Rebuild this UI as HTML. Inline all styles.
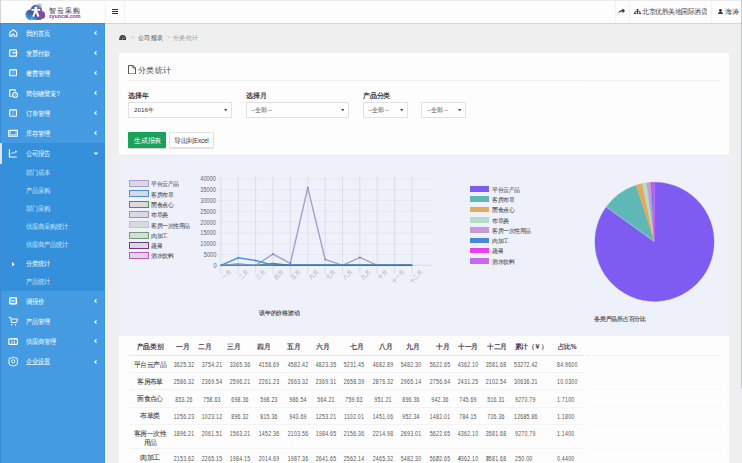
<!DOCTYPE html><html><head><meta charset="utf-8"><style>
*{margin:0;padding:0;box-sizing:border-box}
html,body{width:742px;height:463px;overflow:hidden;background:#efefef;font-family:"Liberation Sans",sans-serif;color:#555}
.abs{position:absolute;white-space:nowrap}
.t{position:absolute;white-space:nowrap;line-height:1}

</style></head><body>
<div class="abs" style="left:0;top:0;width:742px;height:24px;background:#fdfdfd;border-bottom:1px solid #d6d6d6;border-top:1px solid #ececec"></div>
<div class="abs" style="left:105.6px;top:24px;width:1.2px;height:439px;background:#f9f7f4"></div>
<div class="abs" style="left:104.5px;top:1px;width:1px;height:22px;background:#f2f2f2"></div>
<div class="abs" style="left:124px;top:1px;width:1px;height:22px;background:#f2f2f2"></div>
<div class="abs" style="left:614.5px;top:1px;width:1px;height:22px;background:#f2f2f2"></div>
<div class="abs" style="left:629px;top:1px;width:1px;height:22px;background:#f2f2f2"></div>
<div class="abs" style="left:710.5px;top:1px;width:1px;height:22px;background:#f2f2f2"></div>
<svg class="abs" style="left:0;top:0" width="50" height="23" viewBox="0 0 50 23">
<defs><linearGradient id="lg" x1="0.1" y1="0.9" x2="0.9" y2="0.2"><stop offset="0" stop-color="#45b8d8"/><stop offset="0.35" stop-color="#3a7cc4"/><stop offset="0.6" stop-color="#3d5aa8"/><stop offset="1" stop-color="#9a4aa2"/></linearGradient>
<linearGradient id="lg2" x1="0" y1="0" x2="1" y2="0"><stop offset="0" stop-color="#a040a0" stop-opacity="0"/><stop offset="0.6" stop-color="#a040a0" stop-opacity="0"/><stop offset="1" stop-color="#b0409a" stop-opacity="0.9"/></linearGradient>
<radialGradient id="rg" cx="0.55" cy="0.2" r="0.5"><stop offset="0" stop-color="#6cc6dc" stop-opacity="0.9"/><stop offset="1" stop-color="#6cc6dc" stop-opacity="0"/></radialGradient></defs>
<g fill="url(#lg)"><circle cx="36.2" cy="10.6" r="5.9"/><circle cx="30.6" cy="14.8" r="5.2"/><circle cx="41" cy="15.1" r="4.1"/><rect x="30.6" y="13" width="10.4" height="7"/></g>
<g fill="url(#lg2)"><circle cx="36.2" cy="10.6" r="5.9"/><circle cx="41" cy="15.1" r="4.1"/><rect x="30.6" y="13" width="10.4" height="7"/></g>
<circle cx="39" cy="7.5" r="4" fill="url(#rg)"/>
<circle cx="35.8" cy="7.9" r="1.5" fill="#fff"/>
<path d="M31.6 9.9 H40.1" stroke="#fff" stroke-width="1.7"/>
<path d="M35.8 10 L33.2 16.6 M35.8 10 L38.5 16.6" stroke="#fff" stroke-width="2"/>
</svg>
<div class="t" style="left:49.2px;top:6.6px;font-size:29.600px;color:#45455e;letter-spacing:3.400px;-webkit-text-stroke:0.400px #45455e;;transform:scale(0.2425,0.25);transform-origin:0 0">智云采购</div>
<div class="t" style="left:49.3px;top:13.9px;font-size:21.400px;color:#8b3d9b;font-weight:bold;letter-spacing:-0.200px;transform:scale(0.2500,0.25);transform-origin:0 0">zyuncai.com</div>
<div class="abs" style="left:112px;top:9px;width:6px;height:1.2px;background:#333"></div>
<div class="abs" style="left:112px;top:11px;width:6px;height:1.2px;background:#333"></div>
<div class="abs" style="left:112px;top:13px;width:6px;height:1.2px;background:#333"></div>
<svg class="abs" style="left:618.3px;top:8.2px" width="7" height="6" viewBox="0 0 7 6"><path d="M0.5 6 C0.5 3 2 2 4.5 2 L4.5 0.2 L7 2.8 L4.5 5.3 L4.5 3.5 C2.5 3.5 1.2 4 0.5 6Z" fill="#333"/></svg>
<svg class="abs" style="left:633.8px;top:8.7px" width="7" height="5.4" viewBox="0 0 7 5.4"><rect x="2.6" y="0" width="1.8" height="1.7" fill="#2a2a2a"/><circle cx="0.95" cy="4.4" r="0.95" fill="#2a2a2a"/><circle cx="3.5" cy="4.4" r="0.95" fill="#2a2a2a"/><circle cx="6.05" cy="4.4" r="0.95" fill="#2a2a2a"/><path d="M0.95 3.6 V2.6 H6.05 V3.6 M3.5 1.5 V3.6" stroke="#2a2a2a" stroke-width="0.7" fill="none"/></svg>
<div class="t" style="left:642.3px;top:8px;font-size:26.400px;color:#444;transform:scale(0.2500,0.25);transform-origin:0 0">北京优胜美地国际酒店</div>
<svg class="abs" style="left:718px;top:8.5px" width="5" height="5.5" viewBox="0 0 5 5.5"><circle cx="2.5" cy="1.5" r="1.4" fill="#333"/><path d="M0 5.5 C0 3.5 1 3 2.5 3 C4 3 5 3.5 5 5.5Z" fill="#333"/></svg>
<div class="t" style="left:724.8px;top:8px;font-size:27.200px;color:#444;transform:scale(0.2500,0.25);transform-origin:0 0">海涛</div>
<div class="abs" style="left:740.8px;top:0px;width:1.2px;height:389px;background:#c5c9cf"></div>
<div class="abs" style="left:0;top:23px;width:105px;height:440px;background:#449be2"></div>
<div class="abs" style="left:0;top:143px;width:105px;height:148px;background:#3590db"></div>
<div class="abs" style="left:104px;top:23px;width:1px;height:440px;background:#3b91dd;opacity:0.6"></div>
<div class="abs" style="left:0;top:23px;width:105px;height:1px;background:#3a8edb"></div>
<div class="abs" style="left:0;top:23px;width:0.8px;height:440px;background:#3a8ad5"></div>
<div class="abs" style="left:0;top:0;width:0.8px;height:23px;background:#d4d4d4"></div>
<div class="abs" style="left:0;top:143px;width:1.7px;height:20.5px;background:#dce3ea"></div>
<svg class="abs" style="left:0;top:0" width="105" height="463" viewBox="0 0 105 463">
<g stroke="#fff" fill="none" stroke-linejoin="round" stroke-width="1.1">
<path d="M9.6 32.6 L13.3 29.6 L17 32.6"/>
<path d="M9.8 32.4 V36.2 H11.9 V34.6 Q13.0 33.6 14.1 34.6 V36.2 H16.8 V32.4"/>
<rect x="9.7" y="49.9" width="6.7" height="6.2"/>
<path d="M14.2 52.8 H17.6"/>
<rect x="9.7" y="69.9" width="6.8" height="5.9" rx="0.4"/>
<path d="M12.0 71.2 V74.6 M13.1 71.2 V74.6 M14.2 71.2 V74.6" stroke-width="0.4" opacity="0.6"/>
<path d="M15.3 91.5 V89.9 H9.7 V96.2 H11.8"/>
<circle cx="15.1" cy="94.9" r="2.4"/>
<rect x="9.7" y="109.9" width="6.8" height="6.3" rx="0.8"/>
<path d="M11.7 111.7 H14.5 M11.7 113 H14.5 M11.7 114.3 H14.5" stroke-width="0.5" opacity="0.6"/>
<rect x="8.7" y="130.4" width="8.7" height="5.9" rx="0.4"/>
<path d="M10.2 132.5 V135 H16 V132.5 M10 131.5 H11 M15.5 131.5 H16.2" stroke-width="0.8"/>
<path d="M9.4 149.2 V157 H16.8"/>
<path d="M10.5 154.1 L12.5 152.5 L14 153.4 L15.6 151.8" stroke-width="0.8"/>
<rect x="9.7" y="297.9" width="6.8" height="6" rx="0.4"/>
<path d="M11 299 V302.5 L13.1 304.3 L15.2 302.5 V299" stroke-width="0.7"/>
<path d="M8.7 317.4 H10.6 L11.5 322.5 H16.6 L17.5 319 H11.2" stroke-width="0.95"/>
<rect x="8.8" y="338.9" width="8.6" height="5.5" rx="0.6"/>
<path d="M12 340.5 V343.5 M14.4 340.5 V343.5" stroke-width="0.8"/>
<path d="M13.2 357 L14.8 358 L16.9 358 L17.5 359.8 L17.5 362.8 L16.9 364.6 L14.8 365.6 L13.2 366 L11.6 365.6 L9.5 364.6 L8.9 362.8 L8.9 359.8 L9.5 358 L11.6 358 Z" stroke-width="0.95"/>
<circle cx="13.2" cy="361.3" r="1.6" stroke-width="0.9"/>
</g>
<g fill="#fff">
<circle cx="13.4" cy="52.8" r="1.05"/>
<circle cx="15.8" cy="151.6" r="0.95"/>
<circle cx="13.1" cy="300.9" r="0.9"/>
<rect x="13.6" y="338" width="3.4" height="1.2"/>
<circle cx="11.7" cy="324.7" r="0.7"/><circle cx="15.5" cy="324.7" r="0.7"/>
<path d="M14.4 94.2 L15.1 95.8 L15.8 94.2 Z"/>
</g></svg>
<div class="t" style="left:25.8px;top:29.90px;font-size:27.200px;color:#fff;;transform:scale(0.2250,0.25);transform-origin:0 0">我的首页</div>
<svg class="abs" style="left:94.3px;top:31.4px" width="3" height="4" viewBox="0 0 3 4"><path d="M2.5 0.3 L0.8 2 L2.5 3.7" stroke="#fff" stroke-width="1.1" fill="none"/></svg>
<div class="t" style="left:25.8px;top:49.80px;font-size:27.200px;color:#fff;;transform:scale(0.2250,0.25);transform-origin:0 0">发票付款</div>
<svg class="abs" style="left:94.3px;top:51.3px" width="3" height="4" viewBox="0 0 3 4"><path d="M2.5 0.3 L0.8 2 L2.5 3.7" stroke="#fff" stroke-width="1.1" fill="none"/></svg>
<div class="t" style="left:25.8px;top:69.70px;font-size:27.200px;color:#fff;;transform:scale(0.2250,0.25);transform-origin:0 0">餐费管理</div>
<svg class="abs" style="left:94.3px;top:71.2px" width="3" height="4" viewBox="0 0 3 4"><path d="M2.5 0.3 L0.8 2 L2.5 3.7" stroke="#fff" stroke-width="1.1" fill="none"/></svg>
<div class="t" style="left:25.8px;top:89.50px;font-size:27.200px;color:#fff;;transform:scale(0.2250,0.25);transform-origin:0 0">简创确警宠?</div>
<svg class="abs" style="left:94.3px;top:91.0px" width="3" height="4" viewBox="0 0 3 4"><path d="M2.5 0.3 L0.8 2 L2.5 3.7" stroke="#fff" stroke-width="1.1" fill="none"/></svg>
<div class="t" style="left:25.8px;top:109.50px;font-size:27.200px;color:#fff;;transform:scale(0.2250,0.25);transform-origin:0 0">订单管理</div>
<svg class="abs" style="left:94.3px;top:111.0px" width="3" height="4" viewBox="0 0 3 4"><path d="M2.5 0.3 L0.8 2 L2.5 3.7" stroke="#fff" stroke-width="1.1" fill="none"/></svg>
<div class="t" style="left:25.8px;top:129.50px;font-size:27.200px;color:#fff;;transform:scale(0.2250,0.25);transform-origin:0 0">库存管理</div>
<svg class="abs" style="left:94.3px;top:131.0px" width="3" height="4" viewBox="0 0 3 4"><path d="M2.5 0.3 L0.8 2 L2.5 3.7" stroke="#fff" stroke-width="1.1" fill="none"/></svg>
<div class="t" style="left:25.8px;top:149.50px;font-size:27.200px;color:#fff;;transform:scale(0.2250,0.25);transform-origin:0 0">公司报告</div>
<svg class="abs" style="left:93.5px;top:151.7px" width="4" height="3" viewBox="0 0 4 3"><path d="M0.4 0.5 L2 2.1 L3.6 0.5" stroke="#fff" stroke-width="1.2" fill="none"/></svg>
<div class="t" style="left:25.7px;top:168.90px;font-size:26.800px;color:#d2e6f8;transform:scale(0.2250,0.25);transform-origin:0 0">部门成本</div>
<div class="t" style="left:25.7px;top:187.00px;font-size:26.800px;color:#d2e6f8;transform:scale(0.2250,0.25);transform-origin:0 0">产品采购</div>
<div class="t" style="left:25.7px;top:205.10px;font-size:26.800px;color:#d2e6f8;transform:scale(0.2250,0.25);transform-origin:0 0">部门采购</div>
<div class="t" style="left:25.7px;top:222.90px;font-size:26.800px;color:#d2e6f8;transform:scale(0.2250,0.25);transform-origin:0 0">供应商采购统计</div>
<div class="t" style="left:25.7px;top:241.40px;font-size:26.800px;color:#d2e6f8;transform:scale(0.2250,0.25);transform-origin:0 0">供应商产品统计</div>
<div class="t" style="left:25.7px;top:260.10px;font-size:26.800px;color:#fff;transform:scale(0.2250,0.25);transform-origin:0 0">分类统计</div>
<div class="t" style="left:25.7px;top:278.20px;font-size:26.800px;color:#d2e6f8;transform:scale(0.2250,0.25);transform-origin:0 0">产品统计</div>
<svg class="abs" style="left:12px;top:262px" width="3" height="4.5" viewBox="0 0 3 4.5"><path d="M0 0 L2.6 2.25 L0 4.5Z" fill="#fff"/></svg>
<div class="t" style="left:25.8px;top:297.90px;font-size:27.200px;color:#fff;;transform:scale(0.2250,0.25);transform-origin:0 0">调报价</div>
<svg class="abs" style="left:94.3px;top:299.4px" width="3" height="4" viewBox="0 0 3 4"><path d="M2.5 0.3 L0.8 2 L2.5 3.7" stroke="#fff" stroke-width="1.1" fill="none"/></svg>
<div class="t" style="left:25.8px;top:318.00px;font-size:27.200px;color:#fff;;transform:scale(0.2250,0.25);transform-origin:0 0">产品管理</div>
<svg class="abs" style="left:94.3px;top:319.5px" width="3" height="4" viewBox="0 0 3 4"><path d="M2.5 0.3 L0.8 2 L2.5 3.7" stroke="#fff" stroke-width="1.1" fill="none"/></svg>
<div class="t" style="left:25.8px;top:337.90px;font-size:27.200px;color:#fff;;transform:scale(0.2250,0.25);transform-origin:0 0">供应商管理</div>
<svg class="abs" style="left:94.3px;top:339.4px" width="3" height="4" viewBox="0 0 3 4"><path d="M2.5 0.3 L0.8 2 L2.5 3.7" stroke="#fff" stroke-width="1.1" fill="none"/></svg>
<div class="t" style="left:25.8px;top:358.00px;font-size:27.200px;color:#fff;text-decoration:underline;;transform:scale(0.2250,0.25);transform-origin:0 0">企业设置</div>
<svg class="abs" style="left:94.3px;top:359.5px" width="3" height="4" viewBox="0 0 3 4"><path d="M2.5 0.3 L0.8 2 L2.5 3.7" stroke="#fff" stroke-width="1.1" fill="none"/></svg>
<svg class="abs" style="left:118.6px;top:34.6px" width="7.4" height="5.6" viewBox="0 0 7.4 5.6"><path d="M0.2 5.4 C0 1.2 1.8 0 3.7 0 C5.6 0 7.4 1.2 7.2 5.4 Z" fill="#3a3a3a"/><path d="M3.4 5 L4.4 2.2 M1.4 3.2 L2.2 3.5 M5.9 3.2 L5.1 3.5 M3.7 1 V1.7" stroke="#cfd3d8" stroke-width="0.6"/></svg>
<div class="t" style="left:131px;top:33.9px;font-size:24.000px;color:#bbb;transform:scale(0.2500,0.25);transform-origin:0 0">&gt;</div>
<div class="t" style="left:137.5px;top:34.8px;font-size:25.400px;color:#3a3a3a;transform:scale(0.2500,0.25);transform-origin:0 0">公司报表</div>
<div class="t" style="left:167.2px;top:33.9px;font-size:24.000px;color:#bbb;transform:scale(0.2500,0.25);transform-origin:0 0">&gt;</div>
<div class="t" style="left:173.2px;top:34.8px;font-size:25.400px;color:#999;transform:scale(0.2500,0.25);transform-origin:0 0">分类统计</div>
<div class="abs" style="left:119px;top:53px;width:610px;height:410px;background:#fdfdfd"></div>
<svg class="abs" style="left:128px;top:65px" width="8" height="9.4" viewBox="0 0 8 9.4"><path d="M0.5 0.5 H5 L7.5 3 V8.9 H0.5 Z M5 0.5 V3 H7.5" stroke="#444" stroke-width="0.9" fill="none"/></svg>
<div class="t" style="left:138.4px;top:65.6px;font-size:32.800px;color:#444;transform:scale(0.2500,0.25);transform-origin:0 0">分类统计</div>
<div class="abs" style="left:128px;top:80.2px;width:453px;height:1px;background:#efefef"></div>
<div class="abs" style="left:581px;top:80.2px;width:139px;height:0;border-top:1px dotted #e6e6e6"></div>
<div class="t" style="left:128.2px;top:91.6px;font-size:27.200px;color:#333;font-weight:bold;transform:scale(0.2500,0.25);transform-origin:0 0">选择年</div>
<div class="t" style="left:245.5px;top:91.6px;font-size:27.200px;color:#333;font-weight:bold;transform:scale(0.2500,0.25);transform-origin:0 0">选择月</div>
<div class="t" style="left:362.6px;top:91.6px;font-size:27.200px;color:#333;font-weight:bold;transform:scale(0.2500,0.25);transform-origin:0 0">产品分类</div>
<div class="abs" style="left:128.2px;top:102.2px;width:103.9px;height:15.6px;background:#fff;border:1px solid #e0e0e6"></div>
<div class="t" style="left:134.0px;top:106.6px;font-size:25.000px;color:#3a3a3a;transform:scale(0.2500,0.25);transform-origin:0 0">2016年</div>
<svg class="abs" style="left:223.7px;top:108.8px" width="3.6" height="2.4" viewBox="0 0 4 2.5" preserveAspectRatio="none"><path d="M0 0 H4 L2 2.5Z" fill="#555"/></svg>
<div class="abs" style="left:245.5px;top:102.2px;width:103.7px;height:15.6px;background:#fff;border:1px solid #e0e0e6"></div>
<div class="t" style="left:251.3px;top:106.6px;font-size:25.000px;color:#3a3a3a;transform:scale(0.2500,0.25);transform-origin:0 0">--全部--</div>
<svg class="abs" style="left:340.8px;top:108.8px" width="3.6" height="2.4" viewBox="0 0 4 2.5" preserveAspectRatio="none"><path d="M0 0 H4 L2 2.5Z" fill="#555"/></svg>
<div class="abs" style="left:362.6px;top:102.2px;width:45.5px;height:15.6px;background:#fff;border:1px solid #e0e0e6"></div>
<div class="t" style="left:368.4px;top:106.6px;font-size:25.000px;color:#3a3a3a;transform:scale(0.2500,0.25);transform-origin:0 0">--全部--</div>
<svg class="abs" style="left:399.7px;top:108.8px" width="3.6" height="2.4" viewBox="0 0 4 2.5" preserveAspectRatio="none"><path d="M0 0 H4 L2 2.5Z" fill="#555"/></svg>
<div class="abs" style="left:420.8px;top:102.2px;width:45.3px;height:15.6px;background:#fff;border:1px solid #e0e0e6"></div>
<div class="t" style="left:426.6px;top:106.6px;font-size:25.000px;color:#3a3a3a;transform:scale(0.2500,0.25);transform-origin:0 0">--全部--</div>
<svg class="abs" style="left:457.7px;top:108.8px" width="3.6" height="2.4" viewBox="0 0 4 2.5" preserveAspectRatio="none"><path d="M0 0 H4 L2 2.5Z" fill="#555"/></svg>
<div class="abs" style="left:128.2px;top:132px;width:38.2px;height:16.2px;background:#19a35a;border-radius:1px;box-shadow:0 0.6px 0.8px rgba(0,0,0,0.18)"></div>
<div class="t" style="left:133.8px;top:136.6px;font-size:27.200px;color:#fff;transform:scale(0.2500,0.25);transform-origin:0 0">生成报表</div>
<div class="abs" style="left:168.7px;top:132px;width:45.7px;height:16.2px;background:#fff;border:1px solid #e2e2e2;border-radius:1px;box-shadow:0 0.6px 0.8px rgba(0,0,0,0.1)"></div>
<div class="t" style="left:174px;top:136.8px;font-size:26.400px;color:#333;transform:scale(0.2500,0.25);transform-origin:0 0">导出到<span style="font-size:25.200px;letter-spacing:-0.800px;padding-left:2px">Excel</span></div>
<div class="abs" style="left:119px;top:154.5px;width:610px;height:181px;background:#eef1fa;border-top:1px solid #e4e9f6"></div>
<svg class="abs" style="left:0;top:0" width="742" height="463" viewBox="0 0 742 463"><line x1="217" y1="265.30" x2="432" y2="265.30" stroke="#dcdee5" stroke-width="0.5"/><line x1="217" y1="254.50" x2="432" y2="254.50" stroke="#dcdee5" stroke-width="0.5"/><line x1="217" y1="243.70" x2="432" y2="243.70" stroke="#dcdee5" stroke-width="0.5"/><line x1="217" y1="232.90" x2="432" y2="232.90" stroke="#dcdee5" stroke-width="0.5"/><line x1="217" y1="222.10" x2="432" y2="222.10" stroke="#dcdee5" stroke-width="0.5"/><line x1="217" y1="211.30" x2="432" y2="211.30" stroke="#dcdee5" stroke-width="0.5"/><line x1="217" y1="200.50" x2="432" y2="200.50" stroke="#dcdee5" stroke-width="0.5"/><line x1="217" y1="189.70" x2="432" y2="189.70" stroke="#dcdee5" stroke-width="0.5"/><line x1="217" y1="178.90" x2="432" y2="178.90" stroke="#dcdee5" stroke-width="0.5"/><line x1="220.90" y1="176.5" x2="220.90" y2="274.4" stroke="#d4d6dc" stroke-width="0.7"/><line x1="238.27" y1="176.5" x2="238.27" y2="274.4" stroke="#d4d6dc" stroke-width="0.7"/><line x1="255.64" y1="176.5" x2="255.64" y2="274.4" stroke="#d4d6dc" stroke-width="0.7"/><line x1="273.01" y1="176.5" x2="273.01" y2="274.4" stroke="#d4d6dc" stroke-width="0.7"/><line x1="290.38" y1="176.5" x2="290.38" y2="274.4" stroke="#d4d6dc" stroke-width="0.7"/><line x1="307.75" y1="176.5" x2="307.75" y2="274.4" stroke="#d4d6dc" stroke-width="0.7"/><line x1="325.12" y1="176.5" x2="325.12" y2="274.4" stroke="#d4d6dc" stroke-width="0.7"/><line x1="342.49" y1="176.5" x2="342.49" y2="274.4" stroke="#d4d6dc" stroke-width="0.7"/><line x1="359.86" y1="176.5" x2="359.86" y2="274.4" stroke="#d4d6dc" stroke-width="0.7"/><line x1="377.23" y1="176.5" x2="377.23" y2="274.4" stroke="#d4d6dc" stroke-width="0.7"/><line x1="394.60" y1="176.5" x2="394.60" y2="274.4" stroke="#d4d6dc" stroke-width="0.7"/><line x1="411.97" y1="176.5" x2="411.97" y2="274.4" stroke="#d4d6dc" stroke-width="0.7"/><polyline points="220.90,265.30 238.27,263.79 255.64,265.30 273.01,264.65 290.38,265.30 307.75,265.30 325.12,265.30 342.49,265.30 359.86,265.30 377.23,265.30 394.60,265.30 411.97,265.30" fill="none" stroke="#8a8a9a" stroke-width="1.2"/><polyline points="220.90,265.30 238.27,265.30 255.64,265.30 273.01,263.36 290.38,265.30 307.75,265.30 325.12,265.30 342.49,265.30 359.86,265.30 377.23,265.30 394.60,265.30 411.97,265.30" fill="none" stroke="#3aa05a" stroke-width="1.2"/><polyline points="220.90,265.30 238.27,264.87 255.64,265.30 273.01,254.07 290.38,263.36 307.75,187.54 325.12,259.36 342.49,265.30 359.86,257.42 377.23,265.30 394.60,265.30 411.97,265.30" fill="none" stroke="#a59dd2" stroke-width="1.4"/><polyline points="220.90,265.30 238.27,257.74 255.64,260.55 273.01,265.30 290.38,265.30 307.75,265.30 325.12,265.30 342.49,265.30 359.86,265.30 377.23,265.30 394.60,265.30 411.97,265.30" fill="none" stroke="#4b95e6" stroke-width="1.4"/><line x1="220.90" y1="265.30" x2="273.01" y2="265.30" stroke="#5a82b0" stroke-width="1.3"/><line x1="273.01" y1="265.30" x2="411.97" y2="265.30" stroke="#3f6fac" stroke-width="1.6"/><line x1="411.97" y1="265.30" x2="432" y2="265.30" stroke="#cfd1d8" stroke-width="0.6"/><circle cx="220.90" cy="265.30" r="0.9" fill="#3a8fe0"/><circle cx="238.27" cy="265.30" r="0.9" fill="#3a8fe0"/><circle cx="255.64" cy="265.30" r="0.9" fill="#3a8fe0"/><circle cx="273.01" cy="265.30" r="0.9" fill="#3a8fe0"/><circle cx="290.38" cy="265.30" r="0.9" fill="#3a8fe0"/><circle cx="307.75" cy="265.30" r="0.9" fill="#3a8fe0"/><circle cx="325.12" cy="265.30" r="0.9" fill="#3a8fe0"/><circle cx="342.49" cy="265.30" r="0.9" fill="#3a8fe0"/><circle cx="359.86" cy="265.30" r="0.9" fill="#3a8fe0"/><circle cx="377.23" cy="265.30" r="0.9" fill="#3a8fe0"/><circle cx="394.60" cy="265.30" r="0.9" fill="#3a8fe0"/><circle cx="411.97" cy="265.30" r="0.9" fill="#3a8fe0"/><circle cx="307.75" cy="187.54" r="0.9" fill="#3a8fe0"/><circle cx="273.01" cy="254.07" r="0.9" fill="#3a8fe0"/><circle cx="359.86" cy="257.42" r="0.9" fill="#3a8fe0"/><circle cx="325.12" cy="259.36" r="0.9" fill="#3a8fe0"/><circle cx="290.38" cy="263.36" r="0.9" fill="#3a8fe0"/><circle cx="238.27" cy="257.74" r="0.9" fill="#3a8fe0"/><circle cx="255.64" cy="260.55" r="0.9" fill="#3a8fe0"/></svg>
<div class="t" style="right:525.9px;top:261.88px;font-size:28.000px;color:#666;transform:scale(0.2000,0.25);transform-origin:100% 0">0</div>
<div class="t" style="right:525.9px;top:251.08px;font-size:28.000px;color:#666;transform:scale(0.2000,0.25);transform-origin:100% 0">5000</div>
<div class="t" style="right:525.9px;top:240.28px;font-size:28.000px;color:#666;transform:scale(0.2000,0.25);transform-origin:100% 0">10000</div>
<div class="t" style="right:525.9px;top:229.48px;font-size:28.000px;color:#666;transform:scale(0.2000,0.25);transform-origin:100% 0">15000</div>
<div class="t" style="right:525.9px;top:218.68px;font-size:28.000px;color:#666;transform:scale(0.2000,0.25);transform-origin:100% 0">20000</div>
<div class="t" style="right:525.9px;top:207.88px;font-size:28.000px;color:#666;transform:scale(0.2000,0.25);transform-origin:100% 0">25000</div>
<div class="t" style="right:525.9px;top:197.08px;font-size:28.000px;color:#666;transform:scale(0.2000,0.25);transform-origin:100% 0">30000</div>
<div class="t" style="right:525.9px;top:186.28px;font-size:28.000px;color:#666;transform:scale(0.2000,0.25);transform-origin:100% 0">35000</div>
<div class="t" style="right:525.9px;top:175.48px;font-size:28.000px;color:#666;transform:scale(0.2000,0.25);transform-origin:100% 0">40000</div>
<div class="t" style="right:511.3px;top:260.2px;font-size:22.400px;color:#a8a8a8;transform:rotate(-45deg) scale(0.2500,0.25);transform-origin:100% 50%">一月</div>
<div class="t" style="right:493.9px;top:260.2px;font-size:22.400px;color:#a8a8a8;transform:rotate(-45deg) scale(0.2500,0.25);transform-origin:100% 50%">二月</div>
<div class="t" style="right:476.6px;top:260.2px;font-size:22.400px;color:#a8a8a8;transform:rotate(-45deg) scale(0.2500,0.25);transform-origin:100% 50%">三月</div>
<div class="t" style="right:459.2px;top:260.2px;font-size:22.400px;color:#a8a8a8;transform:rotate(-45deg) scale(0.2500,0.25);transform-origin:100% 50%">四月</div>
<div class="t" style="right:441.8px;top:260.2px;font-size:22.400px;color:#a8a8a8;transform:rotate(-45deg) scale(0.2500,0.25);transform-origin:100% 50%">五月</div>
<div class="t" style="right:424.4px;top:260.2px;font-size:22.400px;color:#a8a8a8;transform:rotate(-45deg) scale(0.2500,0.25);transform-origin:100% 50%">六月</div>
<div class="t" style="right:407.1px;top:260.2px;font-size:22.400px;color:#a8a8a8;transform:rotate(-45deg) scale(0.2500,0.25);transform-origin:100% 50%">七月</div>
<div class="t" style="right:389.7px;top:260.2px;font-size:22.400px;color:#a8a8a8;transform:rotate(-45deg) scale(0.2500,0.25);transform-origin:100% 50%">八月</div>
<div class="t" style="right:372.3px;top:260.2px;font-size:22.400px;color:#a8a8a8;transform:rotate(-45deg) scale(0.2500,0.25);transform-origin:100% 50%">九月</div>
<div class="t" style="right:355.0px;top:260.2px;font-size:22.400px;color:#a8a8a8;transform:rotate(-45deg) scale(0.2500,0.25);transform-origin:100% 50%">十月</div>
<div class="t" style="right:337.6px;top:260.2px;font-size:22.400px;color:#a8a8a8;transform:rotate(-45deg) scale(0.2500,0.25);transform-origin:100% 50%">十一月</div>
<div class="t" style="right:320.2px;top:260.2px;font-size:22.400px;color:#a8a8a8;transform:rotate(-45deg) scale(0.2500,0.25);transform-origin:100% 50%">十二月</div>
<div class="t" style="left:259.2px;top:310px;font-size:23.200px;color:#555;font-weight:bold;transform:scale(0.2500,0.25);transform-origin:0 0">该年的价格波动</div>
<div class="abs" style="left:129.2px;top:180.20px;width:20px;height:7px;background:#d9d9de;border:1.4px solid #a89fd0"></div>
<div class="t" style="left:151.4px;top:181.40px;font-size:22.000px;color:#555;-webkit-text-stroke:0.320px #555;transform:scale(0.2500,0.25);transform-origin:0 0">平台云产品</div>
<div class="abs" style="left:129.2px;top:190.48px;width:20px;height:7px;background:#d9d9de;border:1.4px solid #4a90e2"></div>
<div class="t" style="left:151.4px;top:191.68px;font-size:22.000px;color:#555;-webkit-text-stroke:0.320px #555;transform:scale(0.2500,0.25);transform-origin:0 0">客房布草</div>
<div class="abs" style="left:129.2px;top:200.76px;width:20px;height:7px;background:#d9d9de;border:1.4px solid #3a9a5a"></div>
<div class="t" style="left:151.4px;top:201.96px;font-size:22.000px;color:#555;-webkit-text-stroke:0.320px #555;transform:scale(0.2500,0.25);transform-origin:0 0">面食点心</div>
<div class="abs" style="left:129.2px;top:211.04px;width:20px;height:7px;background:#d9d9de;border:1.4px solid #9f90b5"></div>
<div class="t" style="left:151.4px;top:212.24px;font-size:22.000px;color:#555;-webkit-text-stroke:0.320px #555;transform:scale(0.2500,0.25);transform-origin:0 0">布草类</div>
<div class="abs" style="left:129.2px;top:221.32px;width:20px;height:7px;background:#d9d9de;border:1.4px solid #a8c8ef"></div>
<div class="t" style="left:151.4px;top:222.52px;font-size:22.000px;color:#555;-webkit-text-stroke:0.320px #555;transform:scale(0.2500,0.25);transform-origin:0 0">客房一次性用品</div>
<div class="abs" style="left:129.2px;top:231.60px;width:20px;height:7px;background:#d9d9de;border:1.4px solid #6aa06a"></div>
<div class="t" style="left:151.4px;top:232.80px;font-size:22.000px;color:#555;-webkit-text-stroke:0.320px #555;transform:scale(0.2500,0.25);transform-origin:0 0">肉加工</div>
<div class="abs" style="left:129.2px;top:241.88px;width:20px;height:7px;background:#d9d9de;border:1.4px solid #6e3c7a"></div>
<div class="t" style="left:151.4px;top:243.08px;font-size:22.000px;color:#555;-webkit-text-stroke:0.320px #555;transform:scale(0.2500,0.25);transform-origin:0 0">蔬菜</div>
<div class="abs" style="left:129.2px;top:252.16px;width:20px;height:7px;background:#d9d9de;border:1.4px solid #c654c6"></div>
<div class="t" style="left:151.4px;top:253.36px;font-size:22.000px;color:#555;-webkit-text-stroke:0.320px #555;transform:scale(0.2500,0.25);transform-origin:0 0">酒水饮料</div>
<div class="abs" style="left:470.4px;top:186.20px;width:18.8px;height:5.6px;background:#7e5cf2"></div>
<div class="t" style="left:492px;top:186.80px;font-size:22.000px;color:#555;-webkit-text-stroke:0.320px #555;transform:scale(0.2500,0.25);transform-origin:0 0">平台云产品</div>
<div class="abs" style="left:470.4px;top:196.48px;width:18.8px;height:5.6px;background:#5fb8b6"></div>
<div class="t" style="left:492px;top:197.08px;font-size:22.000px;color:#555;-webkit-text-stroke:0.320px #555;transform:scale(0.2500,0.25);transform-origin:0 0">客房布草</div>
<div class="abs" style="left:470.4px;top:206.76px;width:18.8px;height:5.6px;background:#e3a95c"></div>
<div class="t" style="left:492px;top:207.36px;font-size:22.000px;color:#555;-webkit-text-stroke:0.320px #555;transform:scale(0.2500,0.25);transform-origin:0 0">面食点心</div>
<div class="abs" style="left:470.4px;top:217.04px;width:18.8px;height:5.6px;background:#b3dccb"></div>
<div class="t" style="left:492px;top:217.64px;font-size:22.000px;color:#555;-webkit-text-stroke:0.320px #555;transform:scale(0.2500,0.25);transform-origin:0 0">布草类</div>
<div class="abs" style="left:470.4px;top:227.32px;width:18.8px;height:5.6px;background:#c89ad2"></div>
<div class="t" style="left:492px;top:227.92px;font-size:22.000px;color:#555;-webkit-text-stroke:0.320px #555;transform:scale(0.2500,0.25);transform-origin:0 0">客房一次性用品</div>
<div class="abs" style="left:470.4px;top:237.60px;width:18.8px;height:5.6px;background:#4a86dc"></div>
<div class="t" style="left:492px;top:238.20px;font-size:22.000px;color:#555;-webkit-text-stroke:0.320px #555;transform:scale(0.2500,0.25);transform-origin:0 0">肉加工</div>
<div class="abs" style="left:470.4px;top:247.88px;width:18.8px;height:5.6px;background:#ea3ff2"></div>
<div class="t" style="left:492px;top:248.48px;font-size:22.000px;color:#555;-webkit-text-stroke:0.320px #555;transform:scale(0.2500,0.25);transform-origin:0 0">蔬菜</div>
<div class="abs" style="left:470.4px;top:258.16px;width:18.8px;height:5.6px;background:#c66be9"></div>
<div class="t" style="left:492px;top:258.76px;font-size:22.000px;color:#555;-webkit-text-stroke:0.320px #555;transform:scale(0.2500,0.25);transform-origin:0 0">酒水饮料</div>
<svg class="abs" style="left:0;top:0" width="742" height="463" viewBox="0 0 742 463"><path d="M654.5,241.8 L654.50,182.20 A59.6,59.6 0 1 1 606.19,206.89 Z" fill="#7e5cf2" stroke="#7e5cf2" stroke-width="0.3"/><path d="M654.5,241.8 L606.19,206.89 A59.6,59.6 0 0 1 636.05,185.13 Z" fill="#5fb8b6" stroke="#5fb8b6" stroke-width="0.3"/><path d="M654.5,241.8 L636.05,185.13 A59.6,59.6 0 0 1 642.23,183.48 Z" fill="#e3a95c" stroke="#e3a95c" stroke-width="0.3"/><path d="M654.5,241.8 L642.23,183.48 A59.6,59.6 0 0 1 646.58,182.73 Z" fill="#b3dccb" stroke="#b3dccb" stroke-width="0.3"/><path d="M654.5,241.8 L646.58,182.73 A59.6,59.6 0 0 1 650.83,182.31 Z" fill="#c89ad2" stroke="#c89ad2" stroke-width="0.3"/><path d="M654.5,241.8 L650.83,182.31 A59.6,59.6 0 0 1 652.48,182.23 Z" fill="#4a86dc" stroke="#4a86dc" stroke-width="0.3"/><path d="M654.5,241.8 L652.48,182.23 A59.6,59.6 0 0 1 654.35,182.20 Z" fill="#ea3ff2" stroke="#ea3ff2" stroke-width="0.3"/><path d="M654.5,241.8 L654.35,182.20 A59.6,59.6 0 0 1 654.50,182.20 Z" fill="#c66be9" stroke="#c66be9" stroke-width="0.3"/><line x1="654.5" y1="241.8" x2="606.19" y2="206.89" stroke="rgba(255,255,255,0.55)" stroke-width="0.5"/></svg>
<div class="t" style="left:593.6px;top:316.2px;font-size:23.200px;color:#555;font-weight:bold;transform:scale(0.2500,0.25);transform-origin:0 0">各类产品所占百分比</div>
<div class="t" style="left:110.3px;width:329.897px;text-align:center;top:343.2px;font-size:26.800px;color:#3f3050;font-weight:bold;;transform:scale(0.2425,0.25);transform-origin:0 0">产品类别</div>
<div class="t" style="left:142.6px;width:329.897px;text-align:center;top:343.2px;font-size:26.800px;color:#3f3050;font-weight:bold;;transform:scale(0.2425,0.25);transform-origin:0 0">一月</div>
<div class="t" style="left:164.6px;width:329.897px;text-align:center;top:343.2px;font-size:26.800px;color:#3f3050;font-weight:bold;;transform:scale(0.2425,0.25);transform-origin:0 0">二月</div>
<div class="t" style="left:194.4px;width:329.897px;text-align:center;top:343.2px;font-size:26.800px;color:#3f3050;font-weight:bold;;transform:scale(0.2425,0.25);transform-origin:0 0">三月</div>
<div class="t" style="left:224.2px;width:329.897px;text-align:center;top:343.2px;font-size:26.800px;color:#3f3050;font-weight:bold;;transform:scale(0.2425,0.25);transform-origin:0 0">四月</div>
<div class="t" style="left:253.9px;width:329.897px;text-align:center;top:343.2px;font-size:26.800px;color:#3f3050;font-weight:bold;;transform:scale(0.2425,0.25);transform-origin:0 0">五月</div>
<div class="t" style="left:283.3px;width:329.897px;text-align:center;top:343.2px;font-size:26.800px;color:#3f3050;font-weight:bold;;transform:scale(0.2425,0.25);transform-origin:0 0">六月</div>
<div class="t" style="left:317.0px;width:329.897px;text-align:center;top:343.2px;font-size:26.800px;color:#3f3050;font-weight:bold;;transform:scale(0.2425,0.25);transform-origin:0 0">七月</div>
<div class="t" style="left:346.4px;width:329.897px;text-align:center;top:343.2px;font-size:26.800px;color:#3f3050;font-weight:bold;;transform:scale(0.2425,0.25);transform-origin:0 0">八月</div>
<div class="t" style="left:373.0px;width:329.897px;text-align:center;top:343.2px;font-size:26.800px;color:#3f3050;font-weight:bold;;transform:scale(0.2425,0.25);transform-origin:0 0">九月</div>
<div class="t" style="left:403.0px;width:329.897px;text-align:center;top:343.2px;font-size:26.800px;color:#3f3050;font-weight:bold;;transform:scale(0.2425,0.25);transform-origin:0 0">十月</div>
<div class="t" style="left:428.0px;width:329.897px;text-align:center;top:343.2px;font-size:26.800px;color:#3f3050;font-weight:bold;;transform:scale(0.2425,0.25);transform-origin:0 0">十一月</div>
<div class="t" style="left:456.7px;width:329.897px;text-align:center;top:343.2px;font-size:26.800px;color:#3f3050;font-weight:bold;;transform:scale(0.2425,0.25);transform-origin:0 0">十二月</div>
<div class="t" style="left:491.3px;width:329.897px;text-align:center;top:343.2px;font-size:26.800px;color:#3f3050;font-weight:bold;;transform:scale(0.2425,0.25);transform-origin:0 0">累计（￥）</div>
<div class="t" style="left:527.0px;width:329.897px;text-align:center;top:343.2px;font-size:26.800px;color:#3f3050;font-weight:bold;;transform:scale(0.2425,0.25);transform-origin:0 0">占比%</div>
<div class="abs" style="left:128.7px;top:354.8px;width:455.6px;height:1px;background:#e6e6e6"></div>
<div class="abs" style="left:586.5px;top:354.8px;width:134px;height:0;border-top:1px dotted #e4e4e4"></div>
<div class="abs" style="left:586.5px;top:372.2px;width:134px;height:0;border-top:1px dotted #f4f4f4"></div>
<div class="abs" style="left:586.5px;top:389.3px;width:134px;height:0;border-top:1px dotted #f4f4f4"></div>
<div class="abs" style="left:586.5px;top:406.7px;width:134px;height:0;border-top:1px dotted #f4f4f4"></div>
<div class="abs" style="left:586.5px;top:424.2px;width:134px;height:0;border-top:1px dotted #f4f4f4"></div>
<div class="abs" style="left:586.5px;top:448px;width:134px;height:0;border-top:1px dotted #f4f4f4"></div>
<div class="abs" style="left:128.7px;top:372.2px;width:455.6px;height:1px;background:#f3f3f3"></div>
<div class="abs" style="left:128.7px;top:389.3px;width:455.6px;height:1px;background:#f3f3f3"></div>
<div class="abs" style="left:128.7px;top:406.7px;width:455.6px;height:1px;background:#f3f3f3"></div>
<div class="abs" style="left:128.7px;top:424.2px;width:455.6px;height:1px;background:#f3f3f3"></div>
<div class="abs" style="left:128.7px;top:448px;width:455.6px;height:1px;background:#f3f3f3"></div>
<div class="t" style="left:110.3px;width:326.531px;text-align:center;top:360.7px;font-size:26.400px;line-height:37.600px;margin-top:-1.1px;color:#444;white-space:normal;-webkit-text-stroke:0.320px #444;;transform:scale(0.2450,0.25);transform-origin:0 0">平台云产品</div>
<div class="t" style="left:153.8px;width:300.000px;text-align:center;top:361.13px;font-size:26.000px;letter-spacing:1.280px;color:#555;transform:scale(0.2000,0.25);transform-origin:0 0">3625.32</div>
<div class="t" style="left:182.1px;width:300.000px;text-align:center;top:361.13px;font-size:26.000px;letter-spacing:1.280px;color:#555;transform:scale(0.2000,0.25);transform-origin:0 0">3754.21</div>
<div class="t" style="left:210.4px;width:300.000px;text-align:center;top:361.13px;font-size:26.000px;letter-spacing:1.280px;color:#555;transform:scale(0.2000,0.25);transform-origin:0 0">3365.36</div>
<div class="t" style="left:238.9px;width:300.000px;text-align:center;top:361.13px;font-size:26.000px;letter-spacing:1.280px;color:#555;transform:scale(0.2000,0.25);transform-origin:0 0">4158.69</div>
<div class="t" style="left:267.5px;width:300.000px;text-align:center;top:361.13px;font-size:26.000px;letter-spacing:1.280px;color:#555;transform:scale(0.2000,0.25);transform-origin:0 0">4582.42</div>
<div class="t" style="left:296.0px;width:300.000px;text-align:center;top:361.13px;font-size:26.000px;letter-spacing:1.280px;color:#555;transform:scale(0.2000,0.25);transform-origin:0 0">4823.35</div>
<div class="t" style="left:324.0px;width:300.000px;text-align:center;top:361.13px;font-size:26.000px;letter-spacing:1.280px;color:#555;transform:scale(0.2000,0.25);transform-origin:0 0">5231.45</div>
<div class="t" style="left:352.6px;width:300.000px;text-align:center;top:361.13px;font-size:26.000px;letter-spacing:1.280px;color:#555;transform:scale(0.2000,0.25);transform-origin:0 0">4682.89</div>
<div class="t" style="left:381.0px;width:300.000px;text-align:center;top:361.13px;font-size:26.000px;letter-spacing:1.280px;color:#555;transform:scale(0.2000,0.25);transform-origin:0 0">5482.30</div>
<div class="t" style="left:409.8px;width:300.000px;text-align:center;top:361.13px;font-size:26.000px;letter-spacing:1.280px;color:#555;transform:scale(0.2000,0.25);transform-origin:0 0">5622.65</div>
<div class="t" style="left:438.0px;width:300.000px;text-align:center;top:361.13px;font-size:26.000px;letter-spacing:1.280px;color:#555;transform:scale(0.2000,0.25);transform-origin:0 0">4362.10</div>
<div class="t" style="left:466.4px;width:300.000px;text-align:center;top:361.13px;font-size:26.000px;letter-spacing:1.280px;color:#555;transform:scale(0.2000,0.25);transform-origin:0 0">3581.68</div>
<div class="t" style="left:514.2px;top:361.13px;font-size:26.000px;letter-spacing:1.280px;color:#555;transform:scale(0.2000,0.25);transform-origin:0 0">53272.42</div>
<div class="t" style="left:556.9px;top:361.13px;font-size:26.000px;letter-spacing:1.280px;color:#555;transform:scale(0.2000,0.25);transform-origin:0 0">84.9600</div>
<div class="t" style="left:110.3px;width:326.531px;text-align:center;top:378.0px;font-size:26.400px;line-height:37.600px;margin-top:-1.1px;color:#444;white-space:normal;-webkit-text-stroke:0.320px #444;;transform:scale(0.2450,0.25);transform-origin:0 0">客房布草</div>
<div class="t" style="left:153.8px;width:300.000px;text-align:center;top:378.43px;font-size:26.000px;letter-spacing:1.280px;color:#555;transform:scale(0.2000,0.25);transform-origin:0 0">2586.32</div>
<div class="t" style="left:182.1px;width:300.000px;text-align:center;top:378.43px;font-size:26.000px;letter-spacing:1.280px;color:#555;transform:scale(0.2000,0.25);transform-origin:0 0">2369.54</div>
<div class="t" style="left:210.4px;width:300.000px;text-align:center;top:378.43px;font-size:26.000px;letter-spacing:1.280px;color:#555;transform:scale(0.2000,0.25);transform-origin:0 0">2596.21</div>
<div class="t" style="left:238.9px;width:300.000px;text-align:center;top:378.43px;font-size:26.000px;letter-spacing:1.280px;color:#555;transform:scale(0.2000,0.25);transform-origin:0 0">2261.23</div>
<div class="t" style="left:267.5px;width:300.000px;text-align:center;top:378.43px;font-size:26.000px;letter-spacing:1.280px;color:#555;transform:scale(0.2000,0.25);transform-origin:0 0">2663.32</div>
<div class="t" style="left:296.0px;width:300.000px;text-align:center;top:378.43px;font-size:26.000px;letter-spacing:1.280px;color:#555;transform:scale(0.2000,0.25);transform-origin:0 0">2369.31</div>
<div class="t" style="left:324.0px;width:300.000px;text-align:center;top:378.43px;font-size:26.000px;letter-spacing:1.280px;color:#555;transform:scale(0.2000,0.25);transform-origin:0 0">2658.39</div>
<div class="t" style="left:352.6px;width:300.000px;text-align:center;top:378.43px;font-size:26.000px;letter-spacing:1.280px;color:#555;transform:scale(0.2000,0.25);transform-origin:0 0">2876.32</div>
<div class="t" style="left:381.0px;width:300.000px;text-align:center;top:378.43px;font-size:26.000px;letter-spacing:1.280px;color:#555;transform:scale(0.2000,0.25);transform-origin:0 0">2965.14</div>
<div class="t" style="left:409.8px;width:300.000px;text-align:center;top:378.43px;font-size:26.000px;letter-spacing:1.280px;color:#555;transform:scale(0.2000,0.25);transform-origin:0 0">2756.64</div>
<div class="t" style="left:438.0px;width:300.000px;text-align:center;top:378.43px;font-size:26.000px;letter-spacing:1.280px;color:#555;transform:scale(0.2000,0.25);transform-origin:0 0">2431.25</div>
<div class="t" style="left:466.4px;width:300.000px;text-align:center;top:378.43px;font-size:26.000px;letter-spacing:1.280px;color:#555;transform:scale(0.2000,0.25);transform-origin:0 0">2102.54</div>
<div class="t" style="left:514.2px;top:378.43px;font-size:26.000px;letter-spacing:1.280px;color:#555;transform:scale(0.2000,0.25);transform-origin:0 0">30636.21</div>
<div class="t" style="left:556.9px;top:378.43px;font-size:26.000px;letter-spacing:1.280px;color:#555;transform:scale(0.2000,0.25);transform-origin:0 0">10.0300</div>
<div class="t" style="left:110.3px;width:326.531px;text-align:center;top:395.2px;font-size:26.400px;line-height:37.600px;margin-top:-1.1px;color:#444;white-space:normal;-webkit-text-stroke:0.320px #444;;transform:scale(0.2450,0.25);transform-origin:0 0">面食点心</div>
<div class="t" style="left:153.8px;width:300.000px;text-align:center;top:395.63px;font-size:26.000px;letter-spacing:1.280px;color:#555;transform:scale(0.2000,0.25);transform-origin:0 0">853.26</div>
<div class="t" style="left:182.1px;width:300.000px;text-align:center;top:395.63px;font-size:26.000px;letter-spacing:1.280px;color:#555;transform:scale(0.2000,0.25);transform-origin:0 0">758.63</div>
<div class="t" style="left:210.4px;width:300.000px;text-align:center;top:395.63px;font-size:26.000px;letter-spacing:1.280px;color:#555;transform:scale(0.2000,0.25);transform-origin:0 0">698.36</div>
<div class="t" style="left:238.9px;width:300.000px;text-align:center;top:395.63px;font-size:26.000px;letter-spacing:1.280px;color:#555;transform:scale(0.2000,0.25);transform-origin:0 0">598.23</div>
<div class="t" style="left:267.5px;width:300.000px;text-align:center;top:395.63px;font-size:26.000px;letter-spacing:1.280px;color:#555;transform:scale(0.2000,0.25);transform-origin:0 0">986.54</div>
<div class="t" style="left:296.0px;width:300.000px;text-align:center;top:395.63px;font-size:26.000px;letter-spacing:1.280px;color:#555;transform:scale(0.2000,0.25);transform-origin:0 0">564.21</div>
<div class="t" style="left:324.0px;width:300.000px;text-align:center;top:395.63px;font-size:26.000px;letter-spacing:1.280px;color:#555;transform:scale(0.2000,0.25);transform-origin:0 0">759.63</div>
<div class="t" style="left:352.6px;width:300.000px;text-align:center;top:395.63px;font-size:26.000px;letter-spacing:1.280px;color:#555;transform:scale(0.2000,0.25);transform-origin:0 0">951.21</div>
<div class="t" style="left:381.0px;width:300.000px;text-align:center;top:395.63px;font-size:26.000px;letter-spacing:1.280px;color:#555;transform:scale(0.2000,0.25);transform-origin:0 0">896.36</div>
<div class="t" style="left:409.8px;width:300.000px;text-align:center;top:395.63px;font-size:26.000px;letter-spacing:1.280px;color:#555;transform:scale(0.2000,0.25);transform-origin:0 0">942.36</div>
<div class="t" style="left:438.0px;width:300.000px;text-align:center;top:395.63px;font-size:26.000px;letter-spacing:1.280px;color:#555;transform:scale(0.2000,0.25);transform-origin:0 0">745.69</div>
<div class="t" style="left:466.4px;width:300.000px;text-align:center;top:395.63px;font-size:26.000px;letter-spacing:1.280px;color:#555;transform:scale(0.2000,0.25);transform-origin:0 0">516.31</div>
<div class="t" style="left:515.4px;top:395.63px;font-size:26.000px;letter-spacing:1.280px;color:#555;transform:scale(0.2000,0.25);transform-origin:0 0">9270.79</div>
<div class="t" style="left:556.9px;top:395.63px;font-size:26.000px;letter-spacing:1.280px;color:#555;transform:scale(0.2000,0.25);transform-origin:0 0">1.7100</div>
<div class="t" style="left:110.3px;width:326.531px;text-align:center;top:412.4px;font-size:26.400px;line-height:37.600px;margin-top:-1.1px;color:#444;white-space:normal;-webkit-text-stroke:0.320px #444;;transform:scale(0.2450,0.25);transform-origin:0 0">布草类</div>
<div class="t" style="left:153.8px;width:300.000px;text-align:center;top:412.83px;font-size:26.000px;letter-spacing:1.280px;color:#555;transform:scale(0.2000,0.25);transform-origin:0 0">1256.23</div>
<div class="t" style="left:182.1px;width:300.000px;text-align:center;top:412.83px;font-size:26.000px;letter-spacing:1.280px;color:#555;transform:scale(0.2000,0.25);transform-origin:0 0">1023.12</div>
<div class="t" style="left:210.4px;width:300.000px;text-align:center;top:412.83px;font-size:26.000px;letter-spacing:1.280px;color:#555;transform:scale(0.2000,0.25);transform-origin:0 0">896.32</div>
<div class="t" style="left:238.9px;width:300.000px;text-align:center;top:412.83px;font-size:26.000px;letter-spacing:1.280px;color:#555;transform:scale(0.2000,0.25);transform-origin:0 0">815.36</div>
<div class="t" style="left:267.5px;width:300.000px;text-align:center;top:412.83px;font-size:26.000px;letter-spacing:1.280px;color:#555;transform:scale(0.2000,0.25);transform-origin:0 0">943.69</div>
<div class="t" style="left:296.0px;width:300.000px;text-align:center;top:412.83px;font-size:26.000px;letter-spacing:1.280px;color:#555;transform:scale(0.2000,0.25);transform-origin:0 0">1253.21</div>
<div class="t" style="left:324.0px;width:300.000px;text-align:center;top:412.83px;font-size:26.000px;letter-spacing:1.280px;color:#555;transform:scale(0.2000,0.25);transform-origin:0 0">1102.01</div>
<div class="t" style="left:352.6px;width:300.000px;text-align:center;top:412.83px;font-size:26.000px;letter-spacing:1.280px;color:#555;transform:scale(0.2000,0.25);transform-origin:0 0">1451.06</div>
<div class="t" style="left:381.0px;width:300.000px;text-align:center;top:412.83px;font-size:26.000px;letter-spacing:1.280px;color:#555;transform:scale(0.2000,0.25);transform-origin:0 0">952.34</div>
<div class="t" style="left:409.8px;width:300.000px;text-align:center;top:412.83px;font-size:26.000px;letter-spacing:1.280px;color:#555;transform:scale(0.2000,0.25);transform-origin:0 0">1482.01</div>
<div class="t" style="left:438.0px;width:300.000px;text-align:center;top:412.83px;font-size:26.000px;letter-spacing:1.280px;color:#555;transform:scale(0.2000,0.25);transform-origin:0 0">784.15</div>
<div class="t" style="left:466.4px;width:300.000px;text-align:center;top:412.83px;font-size:26.000px;letter-spacing:1.280px;color:#555;transform:scale(0.2000,0.25);transform-origin:0 0">726.36</div>
<div class="t" style="left:514.2px;top:412.83px;font-size:26.000px;letter-spacing:1.280px;color:#555;transform:scale(0.2000,0.25);transform-origin:0 0">12685.86</div>
<div class="t" style="left:556.9px;top:412.83px;font-size:26.000px;letter-spacing:1.280px;color:#555;transform:scale(0.2000,0.25);transform-origin:0 0">1.1800</div>
<div class="t" style="left:110.3px;width:326.531px;text-align:center;top:429.9px;font-size:26.400px;line-height:37.600px;margin-top:-1.1px;color:#444;white-space:normal;-webkit-text-stroke:0.320px #444;;transform:scale(0.2450,0.25);transform-origin:0 0">客房一次性<br>用品</div>
<div class="t" style="left:153.8px;width:300.000px;text-align:center;top:430.33px;font-size:26.000px;letter-spacing:1.280px;color:#555;transform:scale(0.2000,0.25);transform-origin:0 0">1896.21</div>
<div class="t" style="left:182.1px;width:300.000px;text-align:center;top:430.33px;font-size:26.000px;letter-spacing:1.280px;color:#555;transform:scale(0.2000,0.25);transform-origin:0 0">2061.51</div>
<div class="t" style="left:210.4px;width:300.000px;text-align:center;top:430.33px;font-size:26.000px;letter-spacing:1.280px;color:#555;transform:scale(0.2000,0.25);transform-origin:0 0">1563.21</div>
<div class="t" style="left:238.9px;width:300.000px;text-align:center;top:430.33px;font-size:26.000px;letter-spacing:1.280px;color:#555;transform:scale(0.2000,0.25);transform-origin:0 0">1452.36</div>
<div class="t" style="left:267.5px;width:300.000px;text-align:center;top:430.33px;font-size:26.000px;letter-spacing:1.280px;color:#555;transform:scale(0.2000,0.25);transform-origin:0 0">2103.56</div>
<div class="t" style="left:296.0px;width:300.000px;text-align:center;top:430.33px;font-size:26.000px;letter-spacing:1.280px;color:#555;transform:scale(0.2000,0.25);transform-origin:0 0">1984.65</div>
<div class="t" style="left:324.0px;width:300.000px;text-align:center;top:430.33px;font-size:26.000px;letter-spacing:1.280px;color:#555;transform:scale(0.2000,0.25);transform-origin:0 0">2156.36</div>
<div class="t" style="left:352.6px;width:300.000px;text-align:center;top:430.33px;font-size:26.000px;letter-spacing:1.280px;color:#555;transform:scale(0.2000,0.25);transform-origin:0 0">2214.98</div>
<div class="t" style="left:381.0px;width:300.000px;text-align:center;top:430.33px;font-size:26.000px;letter-spacing:1.280px;color:#555;transform:scale(0.2000,0.25);transform-origin:0 0">2693.01</div>
<div class="t" style="left:409.8px;width:300.000px;text-align:center;top:430.33px;font-size:26.000px;letter-spacing:1.280px;color:#555;transform:scale(0.2000,0.25);transform-origin:0 0">5622.65</div>
<div class="t" style="left:438.0px;width:300.000px;text-align:center;top:430.33px;font-size:26.000px;letter-spacing:1.280px;color:#555;transform:scale(0.2000,0.25);transform-origin:0 0">4362.10</div>
<div class="t" style="left:466.4px;width:300.000px;text-align:center;top:430.33px;font-size:26.000px;letter-spacing:1.280px;color:#555;transform:scale(0.2000,0.25);transform-origin:0 0">3581.68</div>
<div class="t" style="left:515.4px;top:430.33px;font-size:26.000px;letter-spacing:1.280px;color:#555;transform:scale(0.2000,0.25);transform-origin:0 0">9270.79</div>
<div class="t" style="left:556.9px;top:430.33px;font-size:26.000px;letter-spacing:1.280px;color:#555;transform:scale(0.2000,0.25);transform-origin:0 0">1.1400</div>
<div class="t" style="left:110.3px;width:326.531px;text-align:center;top:454.1px;font-size:26.400px;line-height:37.600px;margin-top:-1.1px;color:#444;white-space:normal;-webkit-text-stroke:0.320px #444;;transform:scale(0.2450,0.25);transform-origin:0 0">肉加工</div>
<div class="t" style="left:153.8px;width:300.000px;text-align:center;top:454.53px;font-size:26.000px;letter-spacing:1.280px;color:#555;transform:scale(0.2000,0.25);transform-origin:0 0">2153.62</div>
<div class="t" style="left:182.1px;width:300.000px;text-align:center;top:454.53px;font-size:26.000px;letter-spacing:1.280px;color:#555;transform:scale(0.2000,0.25);transform-origin:0 0">2265.15</div>
<div class="t" style="left:210.4px;width:300.000px;text-align:center;top:454.53px;font-size:26.000px;letter-spacing:1.280px;color:#555;transform:scale(0.2000,0.25);transform-origin:0 0">1984.15</div>
<div class="t" style="left:238.9px;width:300.000px;text-align:center;top:454.53px;font-size:26.000px;letter-spacing:1.280px;color:#555;transform:scale(0.2000,0.25);transform-origin:0 0">2014.69</div>
<div class="t" style="left:267.5px;width:300.000px;text-align:center;top:454.53px;font-size:26.000px;letter-spacing:1.280px;color:#555;transform:scale(0.2000,0.25);transform-origin:0 0">1987.36</div>
<div class="t" style="left:296.0px;width:300.000px;text-align:center;top:454.53px;font-size:26.000px;letter-spacing:1.280px;color:#555;transform:scale(0.2000,0.25);transform-origin:0 0">2641.65</div>
<div class="t" style="left:324.0px;width:300.000px;text-align:center;top:454.53px;font-size:26.000px;letter-spacing:1.280px;color:#555;transform:scale(0.2000,0.25);transform-origin:0 0">2562.14</div>
<div class="t" style="left:352.6px;width:300.000px;text-align:center;top:454.53px;font-size:26.000px;letter-spacing:1.280px;color:#555;transform:scale(0.2000,0.25);transform-origin:0 0">2465.32</div>
<div class="t" style="left:381.0px;width:300.000px;text-align:center;top:454.53px;font-size:26.000px;letter-spacing:1.280px;color:#555;transform:scale(0.2000,0.25);transform-origin:0 0">5482.30</div>
<div class="t" style="left:409.8px;width:300.000px;text-align:center;top:454.53px;font-size:26.000px;letter-spacing:1.280px;color:#555;transform:scale(0.2000,0.25);transform-origin:0 0">5622.65</div>
<div class="t" style="left:438.0px;width:300.000px;text-align:center;top:454.53px;font-size:26.000px;letter-spacing:1.280px;color:#555;transform:scale(0.2000,0.25);transform-origin:0 0">4362.10</div>
<div class="t" style="left:466.4px;width:300.000px;text-align:center;top:454.53px;font-size:26.000px;letter-spacing:1.280px;color:#555;transform:scale(0.2000,0.25);transform-origin:0 0">3581.68</div>
<div class="t" style="left:514.6px;top:454.53px;font-size:26.000px;letter-spacing:1.280px;color:#555;transform:scale(0.2000,0.25);transform-origin:0 0">250.00</div>
<div class="t" style="left:556.9px;top:454.53px;font-size:26.000px;letter-spacing:1.280px;color:#555;transform:scale(0.2000,0.25);transform-origin:0 0">0.4400</div>
<div class="t" style="left:436.2px;top:454.9px;font-size:24.800px;color:#666;opacity:0.75;transform:scale(0.2500,0.25);transform-origin:0 0">8</div>
<div class="t" style="left:457.6px;top:454.9px;font-size:24.800px;color:#666;opacity:0.75;transform:scale(0.2500,0.25);transform-origin:0 0">4</div>
<div class="t" style="left:486.2px;top:454.9px;font-size:24.800px;color:#666;opacity:0.75;transform:scale(0.2500,0.25);transform-origin:0 0">8</div>
</body></html>
